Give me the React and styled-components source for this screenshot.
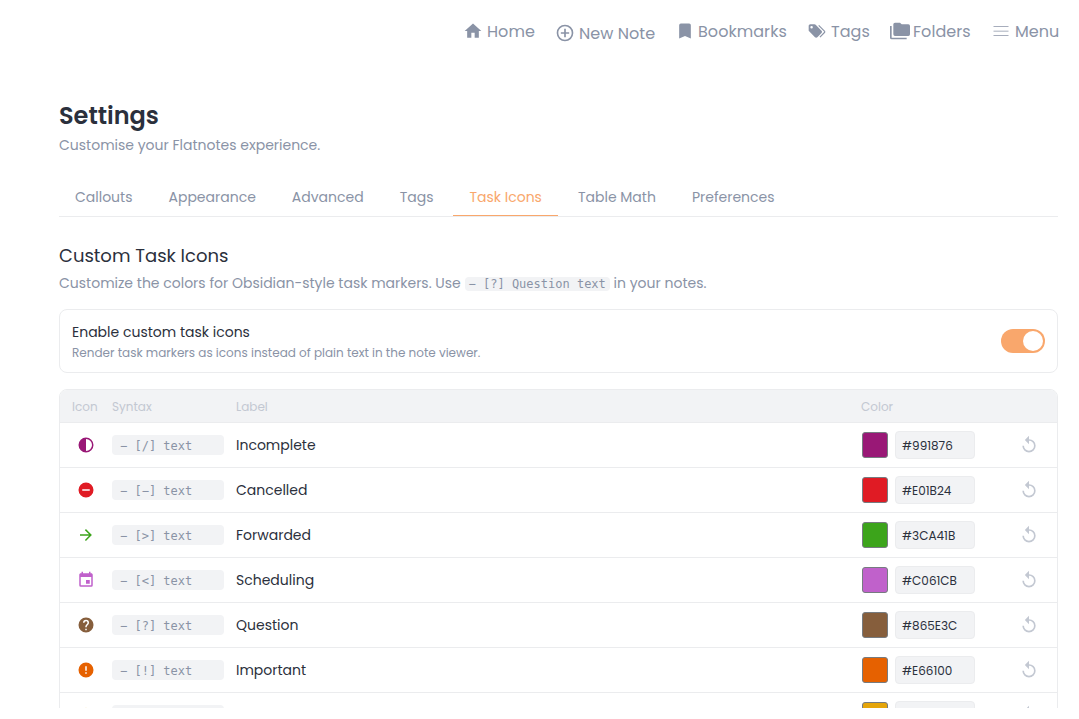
import React from 'react';
import styled, { createGlobalStyle, css } from 'styled-components';

const c = {
  text: '#2b303c',
  muted: '#8a93a6',
  faint: '#c3c8d2',
  line: '#ebecee',
  fill: '#f2f3f5',
  brand: '#f9a76c',
};

const GlobalStyle = createGlobalStyle`
  *, *::before, *::after { box-sizing: border-box; }
  body {
    margin: 0;
    background: #fff;
    color: ${c.text};
    font-family: Poppins, Inter, sans-serif;
  }
  h1, h2, p { margin: 0; font-weight: inherit; }
`;

const Page = styled.div`
  height: 708px;
  overflow: hidden;
`;

const Nav = styled.nav`
  display: flex;
  justify-content: flex-end;
  gap: 20px;
  padding: 19px 20px 0 0;
  height: 96px;
`;

const NavItem = styled.a`
  display: flex;
  align-items: center;
  gap: ${(p) => p.$gap}px;
  width: ${(p) => p.$width}px;
  height: 24px;
  margin-top: ${(p) => (p.$low ? 2 : 0)}px;
  color: ${c.muted};
  font-size: 16px;
  line-height: 24px;
  letter-spacing: 0.05px;
  white-space: nowrap;
`;

const NavText = styled.span`
  padding-top: 1px;
`;

const Svg = styled.svg`
  display: block;
  flex: none;
  width: ${(p) => p.$size || 20}px;
  height: ${(p) => p.$size || 20}px;
  fill: currentColor;
`;

const Content = styled.main`
  padding: 0 21px 0 59px;
`;

const Title = styled.h1`
  padding-top: 3px;
  font-size: 24px;
  line-height: 34px;
  font-weight: 600;
`;

const Subtitle = styled.p`
  height: 24px;
  color: ${c.muted};
  font-size: 14px;
  line-height: 24px;
`;

const Tabs = styled.div`
  display: flex;
  gap: 4px;
  height: 39px;
  margin-top: 21px;
  border-bottom: 1px solid ${c.line};
`;

const Tab = styled.button`
  height: 38px;
  padding: 1px 16px 0;
  border: 0;
  border-bottom: 1px solid transparent;
  background: none;
  color: ${c.muted};
  font: inherit;
  font-size: 14px;
  line-height: 36px;
  white-space: nowrap;
  ${(p) => p.$active && css`
    color: ${c.brand};
    border-bottom-color: ${c.brand};
  `}
`;

const Heading = styled.h2`
  margin-top: 25px;
  font-size: 18px;
  line-height: 28px;
`;

const Hint = styled.p`
  height: 26px;
  color: ${c.muted};
  font-size: 14px;
  line-height: 26px;
  white-space: nowrap;
`;

const InlineCode = styled.code`
  padding: 0 4px;
  border-radius: 4px;
  background: ${c.fill};
  font: 400 12px/15px "DejaVu Sans Mono", monospace;
`;

const Card = styled.section`
  display: flex;
  align-items: center;
  justify-content: space-between;
  height: 64px;
  margin-top: 13px;
  padding: 0 12px;
  border: 1px solid ${c.line};
  border-radius: 8px;
`;

const CardTitle = styled.div`
  font-size: 14px;
  line-height: 22px;
`;

const CardNote = styled.div`
  color: ${c.muted};
  font-size: 12px;
  line-height: 19px;
`;

const Toggle = styled.button`
  display: flex;
  justify-content: flex-end;
  width: 44px;
  height: 24px;
  padding: 2px;
  border: 0;
  border-radius: 12px;
  background: ${c.brand};
`;

const Knob = styled.span`
  width: 20px;
  height: 20px;
  border-radius: 50%;
  background: #fff;
`;

const Table = styled.section`
  margin-top: 16px;
  border: 1px solid ${c.line};
  border-radius: 8px 8px 0 0;
  overflow: hidden;
`;

const Row = styled.div`
  display: grid;
  grid-template-columns: 28px 112px 1fr 140px 32px;
  column-gap: 12px;
  align-items: center;
  height: 45px;
  padding: 0 12px;
  border-bottom: 1px solid ${c.line};
`;

const HeadRow = styled(Row)`
  height: 33px;
  padding-top: 2px;
  background: ${c.fill};
  color: ${c.faint};
  font-size: 12px;
`;

const IconCell = styled.span`
  display: flex;
  justify-content: center;
  color: ${(p) => p.$color};
`;

const Syntax = styled.code`
  height: 20px;
  padding: 1px 8px 0;
  border-radius: 4px;
  background: ${c.fill};
  color: ${c.muted};
  font: 400 12px/20px "DejaVu Sans Mono", monospace;
`;

const Label = styled.span`
  font-size: 14px;
`;

const ColorCell = styled.div`
  display: flex;
  align-items: center;
  gap: 7px;
  padding-left: 1px;
`;

const Swatch = styled.span`
  width: 26px;
  height: 26px;
  border: 1px solid #767b80;
  border-radius: 3px;
  background: ${(p) => p.$color};
`;

const Hex = styled.span`
  width: 80px;
  height: 28px;
  padding-left: 6px;
  border: 1px solid ${c.line};
  border-radius: 4px;
  background: ${c.fill};
  font-size: 12px;
  line-height: 27px;
`;

const Reset = styled.button`
  display: flex;
  justify-content: center;
  padding: 0;
  border: 0;
  background: none;
  color: ${c.faint};
`;

const paths = {
  home: 'M10,20V14H14V20H19V12H22L12,3L2,12H5V20H10Z',
  plus: 'M12,20C7.59,20 4,16.41 4,12C4,7.59 7.59,4 12,4C16.41,4 20,7.59 20,12C20,16.41 16.41,20 12,20M12,2A10,10 0 0,0 2,12A10,10 0 0,0 12,22A10,10 0 0,0 22,12A10,10 0 0,0 12,2M13,7H11V11H7V13H11V17H13V13H17V11H13V7Z',
  bookmark: 'M17,3H7A2,2 0 0,0 5,5V21L12,18L19,21V5C19,3.89 18.1,3 17,3Z',
  tags: 'M5.5,9A1.5,1.5 0 0,0 7,7.5A1.5,1.5 0 0,0 5.5,6A1.5,1.5 0 0,0 4,7.5A1.5,1.5 0 0,0 5.5,9M17.41,11.58C17.77,11.94 18,12.44 18,13C18,13.55 17.78,14.05 17.41,14.41L12.41,19.41C12.05,19.77 11.55,20 11,20C10.45,20 9.95,19.78 9.58,19.41L2.59,12.42C2.22,12.05 2,11.55 2,11V6C2,4.89 2.89,4 4,4H9C9.55,4 10.05,4.22 10.41,4.58L17.41,11.58M13.54,5.71L14.54,4.71L21.41,11.58C21.78,11.94 22,12.45 22,13C22,13.55 21.78,14.05 21.42,14.41L16.04,19.79L15.04,18.79L20.75,13L13.54,5.71Z',
  folders: 'M22,4H14L12,2H6A2,2 0 0,0 4,4V16A2,2 0 0,0 6,18H22A2,2 0 0,0 24,16V6A2,2 0 0,0 22,4M2,6H0V11H0V20A2,2 0 0,0 2,22H20V20H2V6Z',
  menu: 'M3,6.2H21V7.2H3ZM3,11.6H21V12.6H3ZM3,17H21V18H3Z',
  half: 'M12,2A10,10 0 0,0 2,12A10,10 0 0,0 12,22A10,10 0 0,0 22,12A10,10 0 0,0 12,2M12,4A8,8 0 0,1 20,12A8,8 0 0,1 12,20V4Z',
  minus: 'M17,13H7V11H17M12,2A10,10 0 0,0 2,12A10,10 0 0,0 12,22A10,10 0 0,0 22,12A10,10 0 0,0 12,2Z',
  arrow: 'M4,11V13H16L10.5,18.5L11.92,19.92L19.84,12L11.92,4.08L10.5,5.5L16,11H4Z',
  calendar: 'M19,19H5V8H19M16,1V3H8V1H6V3H5C3.89,3 3,3.89 3,5V19A2,2 0 0,0 5,21H19A2,2 0 0,0 21,19V5C21,3.89 20.1,3 19,3H18V1M17,12H12V17H17V12Z',
  help: 'M15.07,11.25L14.17,12.17C13.45,12.89 13,13.5 13,15H11V14.5C11,13.39 11.45,12.39 12.17,11.67L13.41,10.41C13.78,10.05 14,9.55 14,9C14,7.89 13.1,7 12,7A2,2 0 0,0 10,9H8A4,4 0 0,1 12,5A4,4 0 0,1 16,9C16,9.88 15.64,10.67 15.07,11.25M13,19H11V17H13M12,2A10,10 0 0,0 2,12A10,10 0 0,0 12,22A10,10 0 0,0 22,12C22,6.47 17.5,2 12,2Z',
  alert: 'M13,13H11V7H13M13,17H11V15H13M12,2A10,10 0 0,0 2,12A10,10 0 0,0 12,22A10,10 0 0,0 22,12A10,10 0 0,0 12,2Z',
  star: 'M12,17.27L18.18,21L16.54,13.97L22,9.24L14.81,8.62L12,2L9.19,8.62L2,9.24L7.45,13.97L5.82,21L12,17.27Z',
  replay: 'M12,5V1L7,6L12,11V7A6,6 0 0,1 18,13A6,6 0 0,1 12,19A6,6 0 0,1 6,13H4A8,8 0 0,0 12,21A8,8 0 0,0 20,13A8,8 0 0,0 12,5Z',
};

const Icon = ({ name, size }) => (
  <Svg viewBox="0 0 24 24" $size={size} aria-hidden="true">
    <path fillRule="evenodd" d={paths[name]} />
  </Svg>
);

const navItems = [
  { icon: 'home', text: 'Home', width: 72, gap: 4 },
  { icon: 'plus', text: 'New Note', width: 100, gap: 4, low: true },
  { icon: 'bookmark', text: 'Bookmarks', width: 112, gap: 3 },
  { icon: 'tags', text: 'Tags', width: 63, gap: 4 },
  { icon: 'folders', text: 'Folders', width: 81, gap: 3 },
  { icon: 'menu', text: 'Menu', width: 68, gap: 4 },
];

const tabs = ['Callouts', 'Appearance', 'Advanced', 'Tags', 'Task Icons', 'Table Math', 'Preferences'];

const rows = [
  { icon: 'half', mark: '/', label: 'Incomplete', color: '#991876' },
  { icon: 'minus', mark: '−', label: 'Cancelled', color: '#E01B24' },
  { icon: 'arrow', mark: '>', label: 'Forwarded', color: '#3CA41B' },
  { icon: 'calendar', mark: '<', label: 'Scheduling', color: '#C061CB' },
  { icon: 'help', mark: '?', label: 'Question', color: '#865E3C' },
  { icon: 'alert', mark: '!', label: 'Important', color: '#E66100' },
];

export default function App() {
  return (
    <Page>
      <GlobalStyle />
      <Nav>
        {navItems.map((n) => (
          <NavItem key={n.text} $width={n.width} $gap={n.gap} $low={n.low}>
            <Icon name={n.icon} />
            <NavText>{n.text}</NavText>
          </NavItem>
        ))}
      </Nav>
      <Content>
        <Title>Settings</Title>
        <Subtitle>Customise your Flatnotes experience.</Subtitle>
        <Tabs>
          {tabs.map((t) => (
            <Tab key={t} $active={t === 'Task Icons'}>{t}</Tab>
          ))}
        </Tabs>
        <Heading>Custom Task Icons</Heading>
        <Hint>
          Customize the colors for Obsidian-style task markers. Use{' '}
          <InlineCode>− [?] Question text</InlineCode>{' '}
          in your notes.
        </Hint>
        <Card>
          <div>
            <CardTitle>Enable custom task icons</CardTitle>
            <CardNote>Render task markers as icons instead of plain text in the note viewer.</CardNote>
          </div>
          <Toggle aria-label="Enable custom task icons"><Knob /></Toggle>
        </Card>
        <Table>
          <HeadRow>
            <span>Icon</span>
            <span>Syntax</span>
            <span>Label</span>
            <span>Color</span>
          </HeadRow>
          {rows.map((r) => (
            <Row key={r.label}>
              <IconCell $color={r.color}><Icon name={r.icon} size={18} /></IconCell>
              <Syntax>− [{r.mark}] text</Syntax>
              <Label>{r.label}</Label>
              <ColorCell>
                <Swatch $color={r.color} />
                <Hex>{r.color}</Hex>
              </ColorCell>
              <Reset aria-label="Reset"><Icon name="replay" /></Reset>
            </Row>
          ))}
          <Row>
            <IconCell $color="#E5A50A"><Icon name="star" size={18} /></IconCell>
            <Syntax />
            <span />
            <ColorCell>
              <Swatch $color="#E5A50A" />
              <Hex />
            </ColorCell>
            <Reset aria-label="Reset"><Icon name="replay" /></Reset>
          </Row>
        </Table>
      </Content>
    </Page>
  );
}
